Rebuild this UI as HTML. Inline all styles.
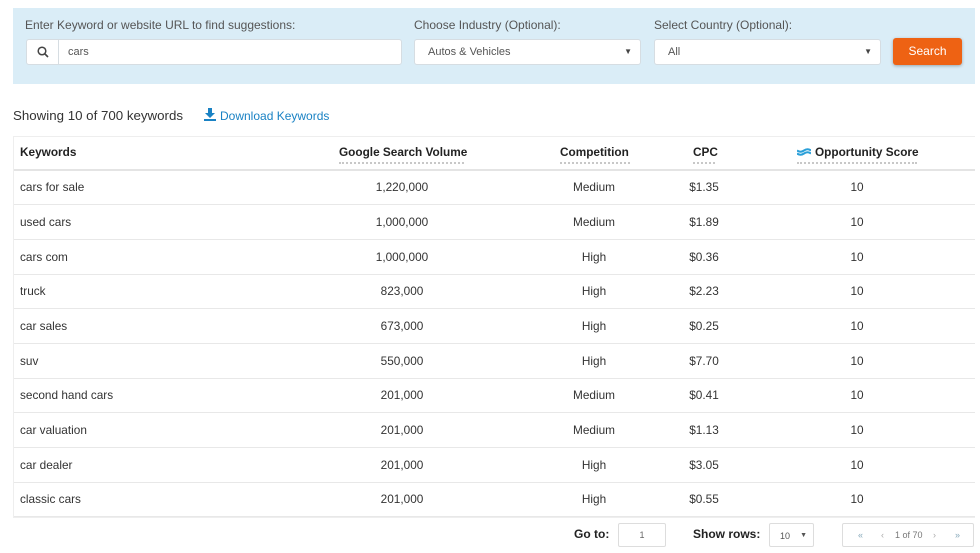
<!DOCTYPE html>
<html><head><style>
*{box-sizing:border-box;margin:0;padding:0}
body{width:980px;height:553px;background:#fff;font-family:"Liberation Sans",sans-serif;color:#333;position:relative;overflow:hidden}
.a{position:absolute}
.panel{left:13px;top:8px;width:962px;height:76px;background:#daedf7}
.lbl{font-size:12px;color:#555;top:18px}
.box{background:#fff;border:1px solid #d6dde2;border-radius:3px;height:26px;top:39px;font-size:11px;color:#555;line-height:24px}
.arr{position:absolute;right:8px;top:0;font-size:8px;color:#444}
.btn{left:893px;top:38px;width:69px;height:27px;background:#ee6213;border-radius:3px;color:#fff;font-size:12px;text-align:center;line-height:27px;box-shadow:0 1px 3px rgba(0,0,0,.3)}
.tbl{left:13px;top:136px;width:962px;height:382px;border:1px solid #eee;border-right:none}
.hd{font-size:11.8px;font-weight:bold;color:#222;top:145px}
.dot{border-bottom:2px dotted #c8c8c8;height:0;top:162px}
.row{left:14px;width:961px;height:35px;border-bottom:1px solid #e8e8e8;font-size:11.8px;color:#333;line-height:34px}
.row span{position:absolute}
.c{transform:translateX(-50%)}
</style></head><body>
<div class="a panel"></div>
<div class="a lbl" style="left:25px">Enter Keyword or website URL to find suggestions:</div>
<div class="a lbl" style="left:414px">Choose Industry (Optional):</div>
<div class="a lbl" style="left:654px">Select Country (Optional):</div>
<div class="a box" style="left:26px;width:376px">
<svg class="a" style="left:10px;top:6px" width="12" height="12" viewBox="0 0 12 12"><circle cx="5" cy="5" r="3.8" fill="none" stroke="#444" stroke-width="1.5"/><path d="M8 8l3 3" stroke="#444" stroke-width="1.6"/></svg>
<div class="a" style="left:31px;top:0;height:24px;border-left:1px solid #d6dde2"></div>
<span class="a" style="left:41px">cars</span></div>
<div class="a box" style="left:414px;width:227px;padding-left:13px">Autos &amp; Vehicles<span class="arr">▼</span></div>
<div class="a box" style="left:654px;width:227px;padding-left:13px">All<span class="arr">▼</span></div>
<div class="a btn">Search</div>
<div class="a" style="left:13px;top:108px;font-size:13.3px;color:#333">Showing 10 of 700 keywords</div>
<svg class="a" style="left:204px;top:108px" width="12" height="13" viewBox="0 0 12 13"><path d="M4 0h4v5h3L6 10 1 5h3z" fill="#1a82c4"/><rect x="0" y="11" width="12" height="2" fill="#1a82c4"/></svg>
<div class="a" style="left:220px;top:109px;font-size:12px;color:#1a82c4">Download Keywords</div>
<div class="a tbl"></div>
<div class="a" style="left:14px;top:169px;width:961px;border-bottom:2px solid #e4e4e4"></div>
<div class="a hd" style="left:20px">Keywords</div>
<div class="a hd" style="left:339px">Google Search Volume</div><div class="a dot" style="left:339px;width:125px"></div>
<div class="a hd" style="left:560px">Competition</div><div class="a dot" style="left:560px;width:70px"></div>
<div class="a hd" style="left:693px">CPC</div><div class="a dot" style="left:693px;width:22px"></div>
<svg class="a" style="left:797px;top:148px" width="14" height="8" viewBox="0 0 14 8"><path d="M0 2.5q3.5 2.5 7 0t7 0" stroke="#2a9fd8" stroke-width="2" fill="none"/><path d="M0 5.5q3.5 2.5 7 0t7 0" stroke="#2a9fd8" stroke-width="2" fill="none"/></svg>
<div class="a hd" style="left:815px">Opportunity Score</div><div class="a dot" style="left:797px;width:120px"></div>

<div class="a row" style="top:170px"><span style="left:6px">cars for sale</span><span class="c" style="left:388px">1,220,000</span><span class="c" style="left:580px">Medium</span><span class="c" style="left:690px">$1.35</span><span class="c" style="left:843px">10</span></div>
<div class="a row" style="top:205px"><span style="left:6px">used cars</span><span class="c" style="left:388px">1,000,000</span><span class="c" style="left:580px">Medium</span><span class="c" style="left:690px">$1.89</span><span class="c" style="left:843px">10</span></div>
<div class="a row" style="top:240px"><span style="left:6px">cars com</span><span class="c" style="left:388px">1,000,000</span><span class="c" style="left:580px">High</span><span class="c" style="left:690px">$0.36</span><span class="c" style="left:843px">10</span></div>
<div class="a row" style="top:274px"><span style="left:6px">truck</span><span class="c" style="left:388px">823,000</span><span class="c" style="left:580px">High</span><span class="c" style="left:690px">$2.23</span><span class="c" style="left:843px">10</span></div>
<div class="a row" style="top:309px"><span style="left:6px">car sales</span><span class="c" style="left:388px">673,000</span><span class="c" style="left:580px">High</span><span class="c" style="left:690px">$0.25</span><span class="c" style="left:843px">10</span></div>
<div class="a row" style="top:344px"><span style="left:6px">suv</span><span class="c" style="left:388px">550,000</span><span class="c" style="left:580px">High</span><span class="c" style="left:690px">$7.70</span><span class="c" style="left:843px">10</span></div>
<div class="a row" style="top:378px"><span style="left:6px">second hand cars</span><span class="c" style="left:388px">201,000</span><span class="c" style="left:580px">Medium</span><span class="c" style="left:690px">$0.41</span><span class="c" style="left:843px">10</span></div>
<div class="a row" style="top:413px"><span style="left:6px">car valuation</span><span class="c" style="left:388px">201,000</span><span class="c" style="left:580px">Medium</span><span class="c" style="left:690px">$1.13</span><span class="c" style="left:843px">10</span></div>
<div class="a row" style="top:448px"><span style="left:6px">car dealer</span><span class="c" style="left:388px">201,000</span><span class="c" style="left:580px">High</span><span class="c" style="left:690px">$3.05</span><span class="c" style="left:843px">10</span></div>
<div class="a row" style="top:482px"><span style="left:6px">classic cars</span><span class="c" style="left:388px">201,000</span><span class="c" style="left:580px">High</span><span class="c" style="left:690px">$0.55</span><span class="c" style="left:843px">10</span></div>

<div class="a" style="left:574px;top:527px;font-size:12px;font-weight:bold;color:#222">Go to:</div>
<div class="a" style="left:618px;top:523px;width:48px;height:24px;border:1px solid #ddd;border-radius:2px;font-size:9px;color:#666;text-align:center;line-height:22px">1</div>
<div class="a" style="left:693px;top:527px;font-size:12px;font-weight:bold;color:#222">Show rows:</div>
<div class="a" style="left:769px;top:523px;width:45px;height:24px;border:1px solid #ddd;border-radius:2px;font-size:9px;color:#555;line-height:24px;padding-left:10px">10<span style="position:absolute;right:6px;font-size:7px">▼</span></div>
<div class="a" style="left:842px;top:523px;width:132px;height:24px;border:1px solid #ddd;border-radius:2px;font-size:9px;color:#888;line-height:22px">
<span class="a" style="left:15px;color:#8ab">«</span><span class="a" style="left:38px;color:#aaa">‹</span><span class="a" style="left:52px;color:#777">1 of 70</span><span class="a" style="left:90px;color:#aaa">›</span><span class="a" style="left:112px;color:#8ab">»</span></div>
</body></html>
